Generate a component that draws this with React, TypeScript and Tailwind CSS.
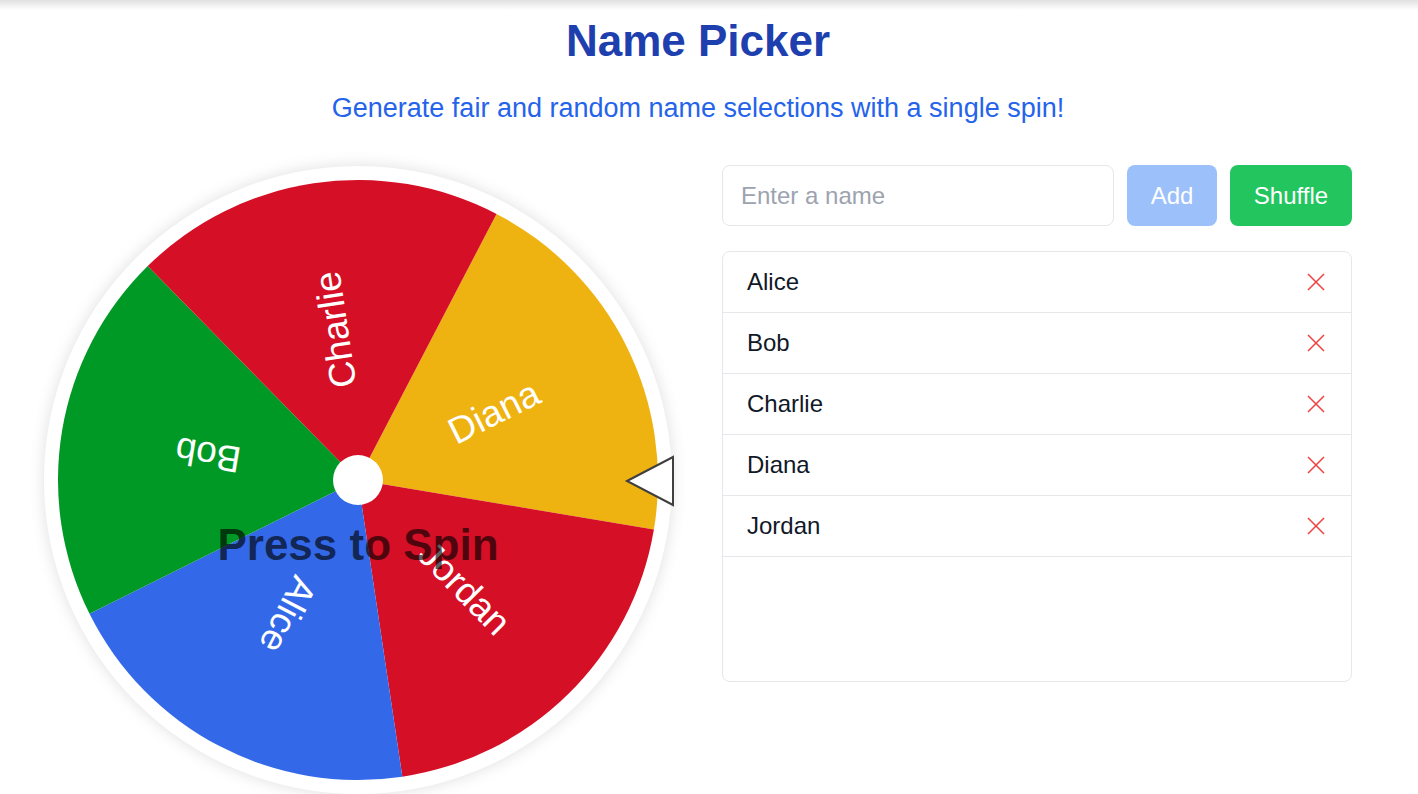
import React, { useState } from 'react'

// wheel segments clockwise, starting at the top-right edge
const START_ANGLE = -62.5
const SEGMENT_COLORS: Record<string, string> = {
    Diana: '#eeb211',
    Jordan: '#d50f25',
    Alice: '#3369e8',
    Bob: '#009925',
    Charlie: '#d50f25',
}
const WHEEL_ORDER = ['Diana', 'Jordan', 'Alice', 'Bob', 'Charlie']

const R = 300
const C = 300

function polar(angle: number, radius: number) {
    const rad = (angle * Math.PI) / 180
    return { x: C + radius * Math.cos(rad), y: C + radius * Math.sin(rad) }
}

function Wheel({ names }: { names: string[] }) {
    const step = 360 / names.length

    return (
        <div className="relative w-[640px] h-[640px] shrink-0 flex items-center justify-center">
            <div className="w-[628px] h-[628px] rounded-full bg-white shadow-[0_0_16px_rgba(0,0,0,0.13)] flex items-center justify-center">
                <svg width="600" height="600" viewBox="0 0 600 600">
                    {names.map((name, i) => {
                        const a1 = START_ANGLE + i * step
                        const a2 = a1 + step
                        const p1 = polar(a1, R)
                        const p2 = polar(a2, R)
                        const mid = a1 + step / 2
                        return (
                            <g key={name}>
                                <path
                                    d={`M${C},${C} L${p1.x},${p1.y} A${R},${R} 0 0 1 ${p2.x},${p2.y} Z`}
                                    fill={SEGMENT_COLORS[name] || '#3369e8'}
                                />
                                <text
                                    x={C + 152}
                                    y={C}
                                    transform={`rotate(${mid} ${C} ${C})`}
                                    textAnchor="middle"
                                    dominantBaseline="central"
                                    fill="#ffffff"
                                    fontSize="37"
                                    fontFamily="'Liberation Sans', Arial, sans-serif"
                                >
                                    {name}
                                </text>
                            </g>
                        )
                    })}
                    <circle cx={C} cy={C} r="25" fill="#ffffff" />
                    <text
                        x={C}
                        y={380}
                        textAnchor="middle"
                        fill="rgba(0,0,0,0.65)"
                        fontSize="44"
                        fontWeight="700"
                        fontFamily="'Liberation Sans', Arial, sans-serif"
                    >
                        Press to Spin
                    </text>
                </svg>
            </div>

            {/* pointer */}
            <svg className="absolute left-[586px] top-[294px]" width="52" height="54" viewBox="0 0 52 54">
                <polygon points="3,27 49,3 49,51" fill="#ffffff" stroke="#3f3f3f" strokeWidth="2" strokeLinejoin="miter" />
            </svg>
        </div>
    )
}

function RemoveIcon() {
    return (
        <svg width="18" height="18" viewBox="0 0 18 18">
            <line x1="1" y1="1" x2="17" y2="17" stroke="#ef4444" strokeWidth="1.6" />
            <line x1="17" y1="1" x2="1" y2="17" stroke="#ef4444" strokeWidth="1.6" />
        </svg>
    )
}

export default function App() {

    const [newName, setNewName] = useState('')
    const [names, setNames] = useState(['Alice', 'Bob', 'Charlie', 'Diana', 'Jordan'])

    const addName = () => {
        if (!newName.trim()) return
        setNames([...names, newName.trim()])
        setNewName('')
    }

    const removeName = (name: string) => {
        setNames(names.filter((n) => n !== name))
    }

    const shuffle = () => {
        const copy = [...names]
        for (let i = copy.length - 1; i > 0; i--) {
            const j = Math.floor(Math.random() * (i + 1))
            ;[copy[i], copy[j]] = [copy[j], copy[i]]
        }
        setNames(copy)
    }

    // wheel keeps its own order so the picture stays put
    const wheelNames = WHEEL_ORDER.filter((n) => names.includes(n))

    return (
        <div className="relative min-h-[794px] bg-white font-['Liberation_Sans',Arial,sans-serif] overflow-hidden">
            <div className="absolute inset-x-0 top-0 h-[10px] bg-linear-to-b from-black/12 to-transparent" />

            <div className="pr-[22px]">
                <h1 className="pt-[19px] text-center text-[44px] leading-[44px] font-bold text-[#1e40af]">
                    Name Picker
                </h1>
                <p className="mt-[27px] text-center text-[27px] leading-[36px] text-[#2563eb]">
                    Generate fair and random name selections with a single spin!
                </p>
            </div>

            <div className="mt-[34px] flex pl-[38px] gap-[44px]">
                <Wheel names={wheelNames} />

                <div className="mt-[5px] w-[630px] shrink-0">
                    <div className="flex gap-[13px]">
                        <input
                            type="text"
                            value={newName}
                            onChange={(e) => setNewName(e.target.value)}
                            placeholder="Enter a name"
                            className="flex-1 min-w-0 h-[61px] px-[18px] border border-[#e5e7eb] rounded-lg text-[24px] text-[#111827] placeholder:text-[#9ca3af] outline-none"
                        />
                        <button
                            onClick={addName}
                            disabled={!newName.trim()}
                            className="w-[90px] h-[61px] rounded-lg bg-[#3b82f6] disabled:opacity-50 text-white text-[24px]"
                        >
                            Add
                        </button>
                        <button
                            onClick={shuffle}
                            className="w-[122px] h-[61px] rounded-lg bg-[#22c55e] text-white text-[24px]"
                        >
                            Shuffle
                        </button>
                    </div>

                    <ul className="mt-[25px] h-[431px] border border-[#e5e7eb] rounded-lg overflow-hidden">
                        {names.map((name) => (
                            <li key={name} className="h-[61px] flex items-center justify-between pl-[24px] pr-[26px] border-b border-[#e5e7eb]">
                                <span className="text-[24px] text-[#111827]">{name}</span>
                                <button onClick={() => removeName(name)} className="flex items-center">
                                    <RemoveIcon />
                                </button>
                            </li>
                        ))}
                    </ul>
                </div>
            </div>
        </div>
    )
}
